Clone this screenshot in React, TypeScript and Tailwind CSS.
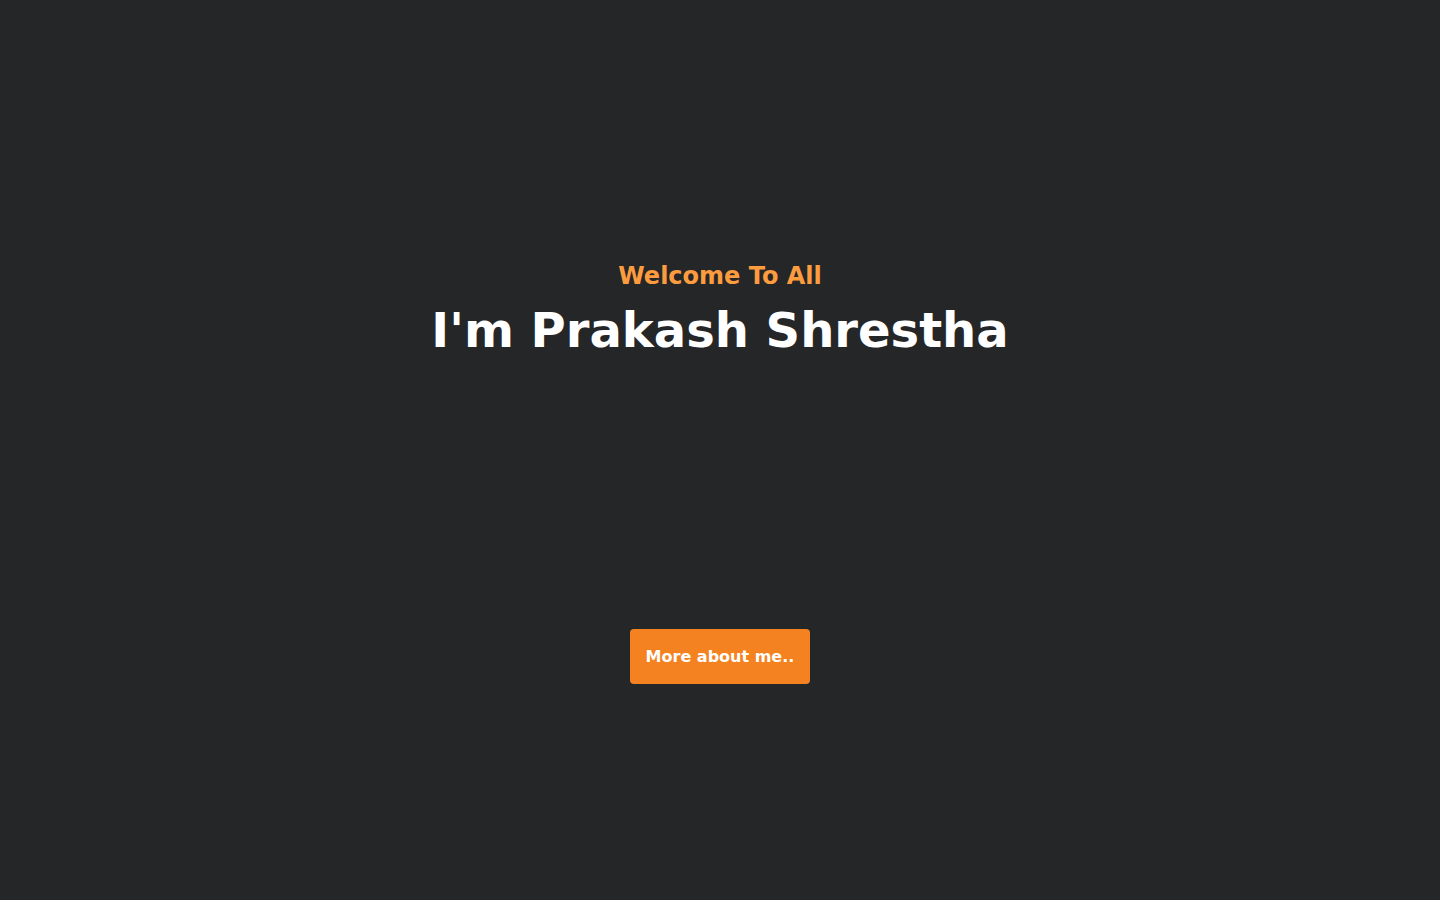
export default function App() {
  return (
    <main className="min-h-screen w-full bg-[#252628] flex flex-col items-center pt-[260px] font-['DejaVu_Sans',sans-serif]">
      <p className="text-2xl leading-8 font-bold text-[#fd9c3f]">Welcome To All</p>
      <h1 className="mt-[14px] text-5xl leading-[48px] font-bold text-white">I'm Prakash Shrestha</h1>
      <button className="mt-[275px] h-[55px] w-[180px] rounded bg-[#f58220] text-base font-bold text-white">
        More about me..
      </button>
    </main>
  );
}
